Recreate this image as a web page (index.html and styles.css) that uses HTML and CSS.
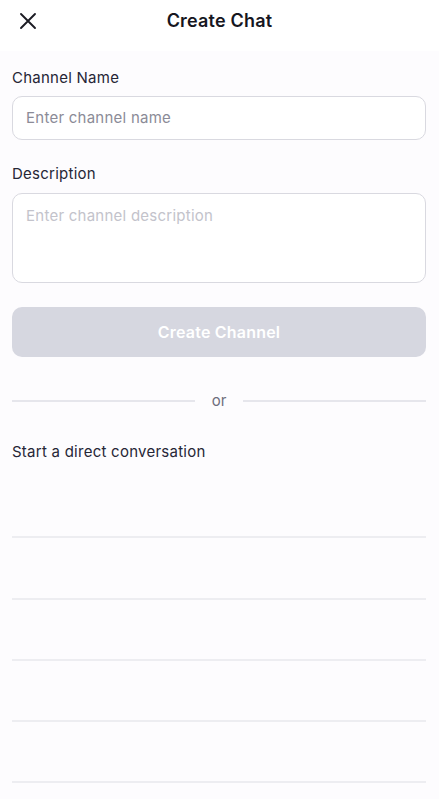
FILE: index.html
```html
<!DOCTYPE html>
<html>
<head>
<meta charset="utf-8">
<link rel="stylesheet" href="styles.css">
</head>
<body>
<div class="screen">
  <header class="header">
    <button class="close" aria-label="Close">
      <svg width="18" height="18" viewBox="0 0 18 18"><path d="M2 2 L16 16 M16 2 L2 16" stroke="#1c1c24" stroke-width="1.9" stroke-linecap="round"/></svg>
    </button>
    <h1 class="title">Create Chat</h1>
  </header>
  <main class="content">
    <label class="label">Channel Name</label>
    <div class="input"><span class="placeholder">Enter channel name</span></div>
    <label class="label label-desc">Description</label>
    <div class="textarea"><span class="placeholder light">Enter channel description</span></div>
    <button class="btn">Create Channel</button>
    <div class="divider"><span class="line"></span><span class="or">or</span><span class="line"></span></div>
    <div class="section">Start a direct conversation</div>
    <ul class="list">
      <li class="row"></li>
      <li class="row"></li>
      <li class="row"></li>
      <li class="row"></li>
      <li class="row"></li>
    </ul>
  </main>
</div>
</body>
</html>
```
FILE: styles.css
```css
* { box-sizing: border-box; }
html, body { margin: 0; padding: 0; }
body {
  background: #fdfcfe;
  font-family: Inter, "Noto Sans", sans-serif;
  color: #262634;
  width: 439px;
  height: 799px;
  overflow: hidden;
}
.header {
  position: relative;
  height: 51px;
  background: #ffffff;
  display: flex;
  align-items: center;
  justify-content: center;
  padding-bottom: 11px;
}
.close {
  position: absolute;
  left: 18px;
  top: 11px;
  width: 20px;
  height: 20px;
  padding: 1px;
  border: 0;
  background: transparent;
  display: flex;
  align-items: center;
  justify-content: center;
}
.title {
  margin: 0;
  font-size: 18px;
  font-weight: 600;
  color: #16161e;
  letter-spacing: 0.2px;
}
.content {
  padding: 17px 13px 0 12px;
  display: flex;
  flex-direction: column;
}
.label {
  font-size: 15px;
  line-height: 20px;
  color: #262636;
  margin-bottom: 8px;
  letter-spacing: 0.25px;
}
.label-desc { margin-top: 24px; margin-bottom: 9px; }
.input {
  height: 44px;
  border: 1px solid #d9d9e0;
  border-radius: 10px;
  background: #ffffff;
  padding: 0 13px;
  display: flex;
  align-items: center;
}
.textarea {
  height: 90px;
  border: 1px solid #d9d9e0;
  border-radius: 10px;
  background: #ffffff;
  padding: 11px 13px;
}
.placeholder {
  font-size: 15px;
  line-height: 20px;
  color: #8b8b97;
  letter-spacing: 0.25px;
}
.placeholder.light { color: #c3c3cb; }
.btn {
  margin-top: 24px;
  height: 50px;
  border: 0;
  border-radius: 10px;
  background: #d6d7e0;
  color: #ffffff;
  font-family: inherit;
  font-size: 16px;
  font-weight: 600;
  letter-spacing: 0.2px;
}
.divider {
  margin-top: 34px;
  display: flex;
  align-items: center;
  gap: 15px;
  height: 20px;
}
.line {
  flex: 1;
  height: 2px;
  background: #e6e6ec;
}
.or {
  width: 18px;
  text-align: center;
  font-size: 15px;
  color: #6e6e7c;
  line-height: 20px;
}
.section {
  margin-top: 31px;
  font-size: 15px;
  line-height: 20px;
  color: #262636;
  letter-spacing: 0.25px;
}
.list {
  list-style: none;
  margin: 15px 0 0 0;
  padding: 0;
}
.row {
  height: 61.3px;
  border-bottom: 2px solid #ededf1;
}
```
